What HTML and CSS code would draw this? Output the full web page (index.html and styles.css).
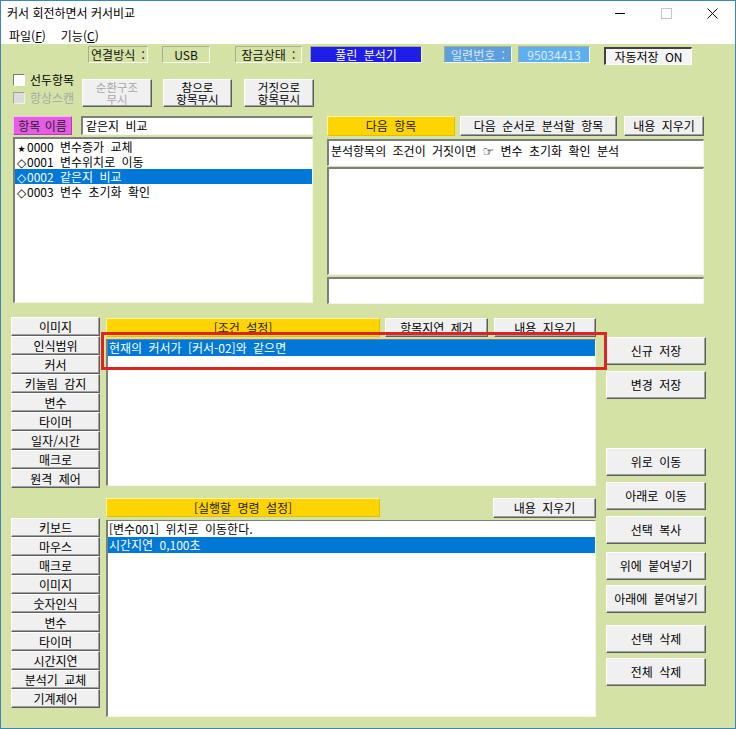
FILE: index.html
```html
<!DOCTYPE html>
<html lang="ko">
<head>
<meta charset="utf-8">
<title>커서 회전하면서 커서비교</title>
<link rel="stylesheet" href="styles.css">
</head>
<body>
<div class="window">
  <div class="titlebar">
    <span class="title">커서 회전하면서 커서비교</span>
    <div class="controls">
      <div class="ctl"><svg width="10" height="10" viewBox="0 0 10 10"><line x1="0" y1="5.5" x2="10" y2="5.5" stroke="#000" stroke-width="1"/></svg></div>
      <div class="ctl"><svg width="11" height="11" viewBox="0 0 11 11"><rect x="0.5" y="0.5" width="10" height="10" fill="none" stroke="#c4c4c4" stroke-width="1"/></svg></div>
      <div class="ctl"><svg width="11" height="11" viewBox="0 0 11 11"><path d="M0.5 0.5 L10.5 10.5 M10.5 0.5 L0.5 10.5" stroke="#000" stroke-width="1" fill="none"/></svg></div>
    </div>
  </div>
  <div class="menubar">
    <span class="menu">파일(<u>F</u>)</span>
    <span class="menu">기능(<u>C</u>)</span>
  </div>
  <div class="client">
    <div class="status-row">
      <div class="stat w60">연결방식 :</div>
      <div class="stat w48 m14">USB</div>
      <div class="stat w67 m25">잠금상태 :</div>
      <div class="stat w112 m8 stat-blue">풀린 분석기</div>
      <div class="stat w68 m22 stat-sky">일련번호 :</div>
      <div class="stat w72 m6 stat-sky2">95034413</div>
      <div class="stat-toggle">자동저장 ON</div>
    </div>

    <div class="options-row">
      <div class="checks">
        <div class="chk-row"><span class="chk"></span><span class="chk-label">선두항목</span></div>
        <div class="chk-row"><span class="chk chk-disabled"></span><span class="chk-label disabled">항상스캔</span></div>
      </div>
      <div class="btn opt-btn disabled-btn"><span class="two">순환구조<br>무시</span></div>
      <div class="btn opt-btn opt2"><span class="two">참으로<br>항목무시</span></div>
      <div class="btn opt-btn opt3"><span class="two">거짓으로<br>항목무시</span></div>
    </div>

    <div class="item-row">
      <div class="left-col">
        <div class="name-row">
          <div class="magenta">항목 이름</div>
          <div class="input sunken">같은지 비교</div>
        </div>
        <div class="list sunken item-list">
          <div class="row"><span class="mark star">★</span>0000 변수증가 교체</div>
          <div class="row"><span class="mark">◇</span>0001 변수위치로 이동</div>
          <div class="row sel"><span class="mark">◇</span>0002 같은지 비교</div>
          <div class="row"><span class="mark">◇</span>0003 변수 초기화 확인</div>
        </div>
      </div>
      <div class="right-col">
        <div class="next-head">
          <div class="yellow next-label">다음 항목</div>
          <div class="btn next-btn">다음 순서로 분석할 항목</div>
          <div class="btn clear-btn1">내용 지우기</div>
        </div>
        <div class="sunken next-text">분석항목의 조건이 거짓이면 <span class="hand">☞</span> 변수 초기화 확인 분석</div>
        <div class="sunken next-area"></div>
        <div class="sunken next-small"></div>
      </div>
    </div>

    <div class="cmd-area">
      <div class="left-btns">
        <div class="btn side">이미지</div>
        <div class="btn side">인식범위</div>
        <div class="btn side">커서</div>
        <div class="btn side">키눌림 감지</div>
        <div class="btn side">변수</div>
        <div class="btn side">타이머</div>
        <div class="btn side">일자/시간</div>
        <div class="btn side">매크로</div>
        <div class="btn side">원격 제어</div>
        <div class="btn side group2">키보드</div>
        <div class="btn side">마우스</div>
        <div class="btn side">매크로</div>
        <div class="btn side">이미지</div>
        <div class="btn side">숫자인식</div>
        <div class="btn side">변수</div>
        <div class="btn side">타이머</div>
        <div class="btn side">시간지연</div>
        <div class="btn side">분석기 교체</div>
        <div class="btn side">기계제어</div>
      </div>
      <div class="center-col">
        <div class="head-row head1">
          <div class="yellow head-label">[조건 설정]</div>
          <div class="btn head-btn hb1">항목지연 제거</div>
          <div class="btn head-btn hb2">내용 지우기</div>
        </div>
        <div class="list sunken cond-list">
          <div class="row sel tall">현재의 커서가 [커서-02]와 같으면</div>
        </div>
        <div class="head-row head2">
          <div class="yellow head-label">[실행할 명령 설정]</div>
          <div class="btn head-btn hb3">내용 지우기</div>
        </div>
        <div class="list sunken exec-list">
          <div class="row tall">[변수001] 위치로 이동한다.</div>
          <div class="row sel tall">시간지연 0,100초</div>
        </div>
      </div>
      <div class="right-btns">
        <div class="btn rb rb-first">신규 저장</div>
        <div class="btn rb g6">변경 저장</div>
        <div class="btn rb g49">위로 이동</div>
        <div class="btn rb g6">아래로 이동</div>
        <div class="btn rb g6">선택 복사</div>
        <div class="btn rb g8">위에 붙여넣기</div>
        <div class="btn rb g5">아래에 붙여넣기</div>
        <div class="btn rb g12">선택 삭제</div>
        <div class="btn rb g5">전체 삭제</div>
      </div>
    </div>

    <div class="highlight"></div>
  </div>
</div>
</body>
</html>
```

FILE: styles.css
```css
* { box-sizing: border-box; }

body {
  margin: 0;
  font-family: "Noto Sans CJK KR", "Noto Sans", "DejaVu Sans", sans-serif;
  font-size: 12px;
  color: #000;
  background: #fff;
}

.window {
  width: 736px;
  height: 729px;
  border: 1px solid #3b87b8;
  display: flex;
  flex-direction: column;
  background: #fff;
  overflow: hidden;
}

/* title bar */
.titlebar {
  height: 22px;
  display: flex;
  align-items: center;
  justify-content: space-between;
  padding-left: 6px;
  flex: none;
}
.title { line-height: 22px; font-size: 12px; padding-top: 1px; }
.controls { display: flex; height: 22px; }
.ctl {
  width: 46px;
  height: 22px;
  display: flex;
  align-items: center;
  justify-content: center;
  padding-top: 2px;
}

.menubar {
  height: 21px;
  display: flex;
  align-items: center;
  padding-left: 8px;
  gap: 15px;
  flex: none;
}
.menu { line-height: 21px; padding-top: 3px; }

/* client area */
.client {
  flex: 1;
  background: #d4e3a5;
  position: relative;
  display: flex;
  flex-direction: column;
  word-spacing: 3px;
}

.status-row {
  margin-top: 2px;
  height: 17px;
  display: flex;
  padding-left: 87px;
  flex: none;
}
.stat {
  height: 17px;
  line-height: 15px;
  text-align: center;
  border: 1px solid;
  border-color: #a9ae92 #f6f9ec #f6f9ec #a9ae92;
  color: #111;
  white-space: nowrap;
}
.w60 { width: 60px; }
.w48 { width: 48px; }
.w67 { width: 67px; }
.w112 { width: 112px; }
.w68 { width: 68px; }
.w72 { width: 72px; }
.m14 { margin-left: 14px; }
.m25 { margin-left: 25px; }
.m8 { margin-left: 8px; }
.m22 { margin-left: 22px; }
.m6 { margin-left: 6px; }
.stat-blue { background: #1e1ee6; color: #fff; }
.stat-sky { background: #5b9fde; color: #dbe8f6; }
.stat-sky2 { background: #5eaef2; color: #d8ecfb; }
.stat-toggle {
  margin-left: 14px;
  width: 88px;
  height: 18px;
  margin-top: 1px;
  line-height: 15px;
  text-align: center;
  background: #f4f4f4;
  border-style: solid;
  border-width: 2px 1px 1px 2px;
  border-color: #404040 #ffffff #ffffff #404040;
  white-space: nowrap;
}

/* options */
.options-row {
  margin-top: 9px;
  height: 36px;
  display: flex;
  flex: none;
}
.checks { width: 81px; padding-left: 12px; flex: none; }
.chk-row { height: 18px; display: flex; align-items: flex-start; }
.chk {
  width: 12px;
  height: 12px;
  margin-top: 2px;
  background: #fff;
  border: 1px solid;
  border-color: #7a7a7a #ffffff #ffffff #7a7a7a;
  flex: none;
}
.chk-disabled { background: #dcdcdc; border-color: #a0a0a0 #f0f0f0 #f0f0f0 #a0a0a0; }
.chk-label { margin-left: 5px; line-height: 16px; white-space: nowrap; }
.chk-label.disabled { color: #a6a6a6; }

.btn {
  background: #f0f0f0;
  border: 1px solid;
  border-color: #ffffff #5e5e5e #5e5e5e #ffffff;
  box-shadow: inset -1px -1px 0 #a0a0a0;
  display: flex;
  align-items: center;
  justify-content: center;
  white-space: nowrap;
  line-height: 14px;
  flex: none;
}
.opt-btn {
  width: 70px;
  height: 28px;
  margin-top: 7px;
}
.two {
  display: block;
  text-align: center;
  font-size: 11.5px;
  line-height: 12px;
}
.opt2 { margin-left: 11px; width: 69px; }
.opt3 { margin-left: 12px; }
.disabled-btn { color: #a8a8a8; }

/* item row */
.item-row {
  margin-top: 8px;
  display: flex;
  flex: none;
}
.left-col { margin-left: 12px; width: 300px; flex: none; }
.right-col { margin-left: 14px; width: 377px; flex: none; }

.name-row { display: flex; height: 19px; }
.magenta {
  width: 59px;
  height: 19px;
  background: #e65ce6;
  border: 1px solid;
  border-color: #f4b6f4 #b040b0 #b040b0 #f4b6f4;
  text-align: center;
  line-height: 17px;
  color: #222;
  white-space: nowrap;
  word-spacing: 1px;
}
.input {
  margin-left: 9px;
  width: 232px;
  height: 19px;
  line-height: 15px;
  padding-left: 3px;
}

.sunken {
  background: #fff;
  border-style: solid;
  border-width: 2px 1px 1px 2px;
  border-color: #7d7d7d #f4f4f0 #f4f4f0 #7d7d7d;
}
.list { overflow: hidden; }
.list .row {
  height: 15px;
  line-height: 15px;
  padding-left: 1px;
  white-space: nowrap;
}
.list .row.tall { height: 16px; line-height: 16px; }
.list .sel { background: #0078d7; color: #fff; }
.mark {
  display: inline-block;
  width: 11px;
  text-align: center;
  font-family: "DejaVu Sans", sans-serif;
  font-size: 12px;
  line-height: 14px;
}
.mark.star { font-size: 9px; }

.item-list { margin-top: 2px; height: 166px; }

.next-head { display: flex; height: 20px; }
.yellow {
  background: #ffd400;
  border: 1px solid;
  border-color: #fff2a0 #e2bd00 #e2bd00 #fff2a0;
  text-align: center;
  color: #222;
  white-space: nowrap;
}
.next-label { width: 128px; height: 20px; line-height: 18px; }
.next-btn { margin-left: 5px; width: 157px; height: 20px; }
.clear-btn1 { margin-left: 7px; width: 80px; height: 20px; }
.next-text {
  margin-top: 3px;
  height: 27px;
  line-height: 20px;
  padding-left: 2px;
  white-space: nowrap;
}
.hand { font-family: "DejaVu Sans", sans-serif; font-size: 13px; }
.next-area { margin-top: 1px; height: 108px; }
.next-small { margin-top: 2px; height: 27px; }

/* command area */
.cmd-area {
  margin-top: 13px;
  display: flex;
  padding-left: 10px;
  flex: none;
}
.left-btns { width: 89px; display: flex; flex-direction: column; flex: none; }
.side { height: 19px; width: 89px; }
.group2 { margin-top: 30px; }

.center-col { margin-left: 6px; width: 490px; display: flex; flex-direction: column; flex: none; }
.head-row { display: flex; height: 19px; }
.head1 { margin-top: 1px; }
.head2 { margin-top: 12px; }
.head-label { width: 274px; height: 19px; line-height: 17px; }
.head-btn { height: 19px; }
.hb1 { margin-left: 5px; width: 103px; }
.hb2 { margin-left: 6px; width: 102px; }
.hb3 { margin-left: 113px; width: 103px; height: 20px; }
.cond-list { margin-top: 2px; height: 147px; border-width: 1px 1px 1px 2px; }
.exec-list { margin-top: 3px; height: 197px; border-width: 1px 1px 1px 2px; }

.right-btns { margin-left: 10px; width: 100px; display: flex; flex-direction: column; flex: none; }
.rb { height: 28px; width: 100px; }
.rb-first { margin-top: 20px; }
.g5 { margin-top: 5px; }
.g6 { margin-top: 6px; }
.g8 { margin-top: 8px; }
.g12 { margin-top: 12px; }
.g49 { margin-top: 49px; }

/* red highlight overlay */
.highlight {
  position: absolute;
  left: 100px;
  top: 288px;
  width: 506px;
  height: 38px;
  border: 3px solid #dc2424;
  pointer-events: none;
}
```
